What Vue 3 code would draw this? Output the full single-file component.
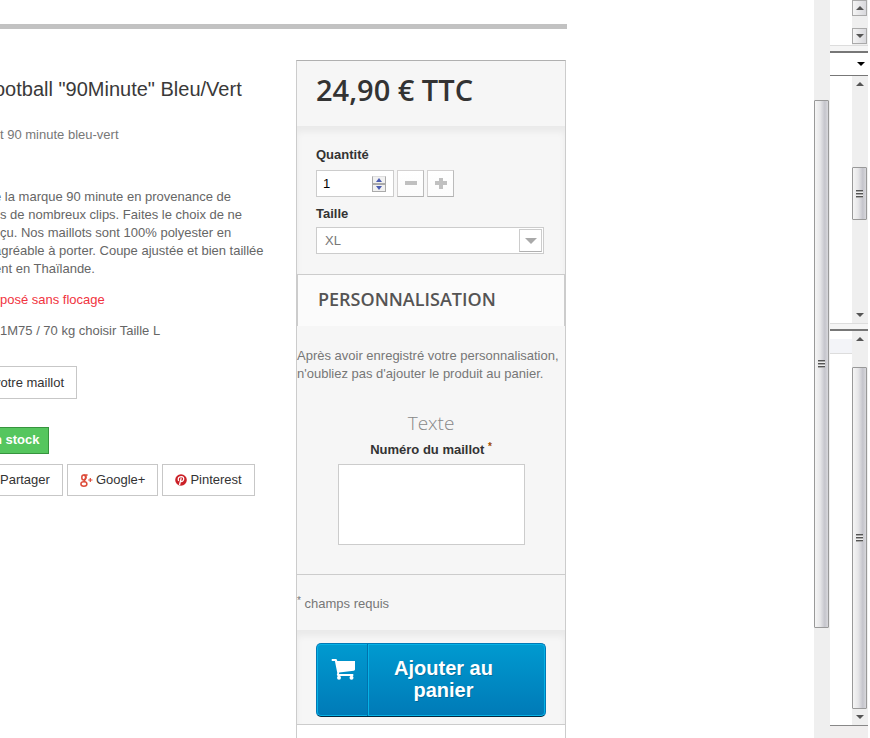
<script setup>
import { ref } from 'vue'

const quantity = ref(1)
const size = ref('XL')
const custom = ref('')
const sizes = ['S', 'M', 'L', 'XL', 'XXL']

const details = [
  { text: 'e la marque 90 minute en provenance de', bleed: true },
  { text: 's de nombreux clips. Faites le choix de ne', bleed: false },
  { text: 'çu. Nos maillots sont 100% polyester en', bleed: false },
  { text: 'agréable à porter. Coupe ajustée et bien taillée', bleed: true },
  { text: 'ent en Thaïlande.', bleed: true }
]

function step(n) {
  quantity.value = Math.max(1, Number(quantity.value) + n)
}
</script>

<template>
  <div class="screen">
    <main class="page">
      <hr class="rule" />
      <div class="product">
        <section class="info">
          <h1 class="bleed">ootball "90Minute" Bleu/Vert</h1>
          <p class="short">t 90 minute bleu-vert</p>
          <p class="details">
            <span v-for="line in details" :key="line.text" :class="{ bleed: line.bleed }">{{ line.text }}</span>
          </p>
          <p class="warning">posé sans flocage</p>
          <p class="advice">1M75 / 70 kg choisir Taille L</p>
          <button type="button" class="plain customize bleed">votre maillot</button>
          <span class="stock bleed">n stock</span>
          <div class="social">
            <button type="button" class="plain share">Partager</button>
            <button type="button" class="plain">
              <svg viewBox="0 0 13 13" width="13" height="13" aria-hidden="true">
                <g fill="none" stroke="#dd4b39" stroke-width="1.5">
                  <ellipse cx="3.7" cy="3.5" rx="1.9" ry="2.5" />
                  <path d="M3.6 .9H7.600M5.400 1.200Q7 3.600 5 5.400Q3.600 6.600 5.400 7.700" />
                  <ellipse cx="3.9" cy="10" rx="3" ry="2.2" />
                </g>
                <path d="M8.200 5.400h1.500V3.900h1.200v1.500h1.600v1.200h-1.600v1.500H9.700V6.600H8.200z" fill="#dd4b39" />
              </svg>
              Google+
            </button>
            <button type="button" class="plain">
              <svg viewBox="0 0 12 12" width="12" height="12" aria-hidden="true">
                <circle cx="6" cy="6" r="5.8" fill="#cb2027" />
                <path d="M3.6 7Q2.200 3.100 6.200 2.600Q9.200 2.700 8.600 5.600Q7.700 8.200 5.700 7.200M6.200 4.200L4.500 11" fill="none" stroke="#fff" stroke-width="1.3" />
              </svg>
              Pinterest
            </button>
          </div>
        </section>

        <form class="card" @submit.prevent>
          <div class="price">24,90 € TTC</div>

          <div class="attributes">
            <label for="quantity">Quantité</label>
            <div class="quantity">
              <div class="number">
                <input id="quantity" v-model="quantity" type="number" min="1" />
                <div class="spin">
                  <button type="button" aria-label="Augmenter" @click="step(1)">
                    <svg viewBox="0 0 6 4" width="6" height="4"><path d="M0 4L3 0L6 4z" fill="#4a5cb0" /></svg>
                  </button>
                  <button type="button" aria-label="Diminuer" @click="step(-1)">
                    <svg viewBox="0 0 6 4" width="6" height="4"><path d="M0 0L3 4L6 0z" fill="#4a5cb0" /></svg>
                  </button>
                </div>
              </div>
              <button type="button" class="step" aria-label="Moins" @click="step(-1)">
                <svg viewBox="0 0 12 12" width="12" height="12"><path d="M0 3h12v4H0z" fill="#c0c0c0" /></svg>
              </button>
              <button type="button" class="step" aria-label="Plus" @click="step(1)">
                <svg viewBox="0 0 12 12" width="12" height="12"><path d="M4 0h4v3h4v4H8v4H4V7H0V3h4z" fill="#c0c0c0" /></svg>
              </button>
            </div>
            <label for="size">Taille</label>
            <div class="select">
              <select id="size" v-model="size">
                <option v-for="s in sizes" :key="s">{{ s }}</option>
              </select>
              <span class="arrow">
                <svg viewBox="0 0 12 6" width="12" height="6"><path d="M0 0h12L6 6z" fill="#a9a9a9" /></svg>
              </span>
            </div>
          </div>

          <h2>PERSONNALISATION</h2>
          <div class="custom">
            <p>Après avoir enregistré votre personnalisation, n'oubliez pas d'ajouter le produit au panier.</p>
            <h3>Texte</h3>
            <label for="shirt-number">Numéro du maillot <sup class="star">*</sup></label>
            <textarea id="shirt-number" v-model="custom"></textarea>
          </div>
          <p class="required"><sup>*</sup> champs requis</p>

          <div class="cart">
            <button type="submit" class="add">
              <span class="icon">
                <svg viewBox="0 0 25 21" width="25" height="21" aria-hidden="true">
                  <path d="M1 0h4q1 0 1.300 2H24v8.600q0 1-1.200 1.100L8.200 13.400L8 15h14.300v2H6.600q-1.400-.8-.3-3L3.900 2H1q-1-1 0-2z" fill="#fff" />
                  <circle cx="8" cy="18.700" r="2" fill="#fff" />
                  <circle cx="20.500" cy="18.700" r="2" fill="#fff" />
                </svg>
              </span>
              <span class="text">Ajouter au panier</span>
            </button>
          </div>
        </form>
      </div>
    </main>

    <div class="track main-track" aria-hidden="true">
      <div class="thumb"><i class="grip"></i></div>
    </div>

    <aside class="side">
      <div class="pane first">
        <div class="track">
          <button type="button" class="scroll boxed" aria-label="Haut"><i class="up"></i></button>
          <button type="button" class="scroll boxed" aria-label="Bas"><i class="down"></i></button>
        </div>
      </div>
      <div class="split"></div>
      <button type="button" class="combo" aria-label="Liste"><i class="down wide"></i></button>
      <div class="pane second">
        <div class="track">
          <button type="button" class="scroll" aria-label="Haut"><i class="up"></i></button>
          <div class="rail">
            <div class="thumb"><i class="grip"></i></div>
          </div>
          <button type="button" class="scroll" aria-label="Bas"><i class="down"></i></button>
        </div>
      </div>
      <div class="split"></div>
      <div class="pane third">
        <div class="header"></div>
        <div class="track">
          <button type="button" class="scroll" aria-label="Haut"><i class="up"></i></button>
          <div class="rail">
            <div class="thumb"><i class="grip"></i></div>
          </div>
          <button type="button" class="scroll" aria-label="Bas"><i class="down"></i></button>
        </div>
      </div>
      <div class="status"></div>
    </aside>
  </div>
</template>

<style>
body {
  margin: 0;
  background: #fff;
}
</style>

<style scoped>
* {
  box-sizing: border-box;
}
.screen {
  display: flex;
  min-height: 100vh;
  overflow: hidden;
  font: 13px/18px "Liberation Sans", Arial, sans-serif;
  color: #777;
}
button,
input,
select,
textarea {
  font: inherit;
  margin: 0;
  padding: 0;
}
h1,
h2,
h3,
p {
  margin: 0;
}
label {
  display: block;
  font-weight: bold;
  color: #333;
}

/* Product page */
.page {
  flex: 1;
  min-width: 0;
  display: flex;
  flex-direction: column;
  padding-top: 24px;
}
.rule {
  width: 100%;
  max-width: 567px;
  height: 5px;
  margin: 0;
  border: 0;
  background: #c2c2c2;
}
.product {
  flex: 1;
  max-width: 566px;
  padding-top: 31px;
  display: grid;
  grid-template-columns: minmax(0, 1fr) 270px;
}
.info {
  display: flex;
  flex-direction: column;
  align-items: flex-start;
  padding-top: 17px;
  white-space: nowrap;
}
.bleed {
  margin-left: -6px;
}
h1 {
  font-size: 20px;
  font-weight: normal;
  line-height: 24px;
  color: #3a3939;
}
.short {
  margin-top: 25px;
}
.details {
  display: flex;
  flex-direction: column;
  margin-top: 44px;
  color: #666;
}
.warning {
  margin-top: 13px;
  color: #f13340;
}
.advice {
  margin-top: 13px;
  color: #666;
}
.plain {
  height: 32px;
  padding: 0 12px;
  display: flex;
  align-items: center;
  gap: 3px;
  border: 1px solid #c7c7c7;
  background: #fff;
  color: #333;
}
.customize {
  height: 33px;
  margin-top: 26px;
  padding-left: 0;
  border-left: 0;
}
.stock {
  margin-top: 28px;
  padding: 3px 8px 4px 0;
  border: 1px solid #36943e;
  border-left: 0;
  background: #55c65e;
  color: #fff;
  font-weight: bold;
}
.social {
  display: flex;
  gap: 4px;
  margin-top: 10px;
}
.share {
  padding-left: 0;
  border-left: 0;
}

/* Purchase card */
.card {
  display: flex;
  flex-direction: column;
  border: 1px solid #ccc;
  border-top-color: #b0b0b0;
  border-bottom: 0;
}
.price {
  padding: 9px 19px 16px;
  background: #f6f6f6;
  font: 600 29px/40px "Open Sans", sans-serif;
  color: #333;
}
.attributes,
.cart {
  background: #f6f6f6;
  box-shadow: inset 0 6px 6px rgba(0, 0, 0, 0.05);
}
.attributes {
  padding: 20px 21px 20px 19px;
}
.quantity {
  display: flex;
  gap: 3px;
  margin: 6px 0 8px;
}
.number {
  display: flex;
  align-items: center;
  width: 78px;
  height: 27px;
  padding: 0 7px 0 6px;
  border: 1px solid #ccc;
  background: #fff;
}
.number input {
  flex: 1;
  min-width: 0;
  border: 0;
  outline: 0;
  background: none;
  color: #000;
  appearance: textfield;
}
.number input::-webkit-inner-spin-button {
  appearance: none;
}
.spin {
  display: grid;
}
.spin button {
  width: 14px;
  height: 8px;
  display: grid;
  place-items: center;
  border: 1px solid #aaa;
  background: #f1f1f1;
}
.spin button:first-child {
  border-top-color: #ddd;
}
.step {
  width: 27px;
  height: 27px;
  display: grid;
  place-items: center;
  border: 1px solid #d3d1d1;
  border-right-color: #bbb;
  border-bottom-color: #b0b0b0;
  background: linear-gradient(#fff, #fbfbfb);
}
.select {
  display: grid;
  height: 27px;
  margin-top: 4px;
  border: 1px solid #ccc;
  background: #fff;
}
.select select,
.arrow {
  grid-area: 1 / 1;
}
.select select {
  padding-left: 8px;
  border: 0;
  outline: 0;
  appearance: none;
  background: none;
  color: #777;
}
.arrow {
  justify-self: end;
  display: grid;
  place-items: center;
  width: 23px;
  margin: 1px;
  border: 1px solid #ccc;
  border-bottom-color: #b0b0b0;
  pointer-events: none;
}
h2 {
  padding: 11px 20px 13px;
  border: 1px solid #ccc;
  border-width: 1px 1px 0;
  background: #fbfbfb;
  font: 600 18px/27px "Open Sans", sans-serif;
  color: #555454;
}
.custom {
  display: flex;
  flex-direction: column;
  align-items: center;
  padding: 21px 0 29px;
  background: #f6f6f6;
}
h3 {
  margin-top: 28px;
  font: 300 19px/24px "Open Sans", sans-serif;
  color: #888;
}
.custom label {
  margin: 6px 0 5px;
}
sup {
  font-size: 10px;
  line-height: 0;
  vertical-align: 4px;
}
.star {
  color: #a04a00;
}
textarea {
  width: 187px;
  height: 81px;
  border: 1px solid #ccc;
  background: #fff;
  resize: none;
}
.required {
  padding: 20px 0 17px;
  border-top: 1px solid #ccc;
  background: #f6f6f6;
}
.cart {
  padding: 13px 19px 7px;
  border-bottom: 1px solid #ccc;
}
.add {
  display: flex;
  width: 100%;
  min-height: 74px;
  border: 1px solid #0079b6;
  border-bottom-color: #012740;
  border-radius: 5px;
  background: linear-gradient(#009ad0, #007ab7);
  box-shadow: inset 0 0 0 1px #06b2e6;
  color: #fff;
  font-size: 20px;
  font-weight: bold;
  line-height: 22px;
  text-shadow: 1px 1px rgba(0, 0, 0, 0.2);
}
.icon {
  align-self: stretch;
  width: 51px;
  padding: 15px 0 0 14px;
  border-right: 1px solid #0072ad;
  text-align: left;
}
.text {
  flex: 1;
  align-self: stretch;
  padding: 13px 27px 0 0;
  border-left: 1px solid #06b2e6;
}

/* Scrollbars */
.track {
  display: flex;
  flex-direction: column;
  width: 16px;
  background: #efefef;
}
.main-track::before {
  content: "";
  flex: 100 0 0;
}
.main-track::after {
  content: "";
  flex: 110 0 0;
}
.main-track .thumb {
  flex: 528 0 0;
}
.thumb {
  display: grid;
  place-items: center;
  width: 15px;
  border: 1px solid #999;
  border-radius: 1px;
  background: linear-gradient(90deg, #f5f5f5, #e6e6e8 40%, #c5c5cc 75%, #d8d8dc);
}
.grip {
  width: 7px;
  height: 8px;
  background: repeating-linear-gradient(#555 0 1px, #aaa 1px 2px, #eee 2px 3px);
}
.side {
  display: flex;
  flex-direction: column;
  width: 38px;
  margin-right: 2px;
}
.pane {
  display: flex;
  justify-content: flex-end;
}
.first {
  height: 45px;
}
.first .track {
  justify-content: space-between;
  padding-bottom: 1px;
}
.second {
  flex: 247 0 0;
}
.third {
  flex: 394 0 0;
}
.header {
  flex: 1;
  height: 15px;
  margin-top: 8px;
  border-bottom: 1px solid #ddd;
  background: #f3f4f8;
}
.split {
  height: 8px;
  border-top: 1px solid #ddd;
  border-bottom: 2px solid #777;
  background: #f5f5f5;
}
.scroll {
  display: grid;
  place-items: center;
  width: 15px;
  height: 16px;
  border: 0;
  background: none;
}
.boxed {
  border: 1px solid #aaa;
  background: linear-gradient(90deg, #f5f5f5, #d8d8dc);
}
.up,
.down {
  border: 4px solid transparent;
}
.up {
  border-top: 0;
  border-bottom-color: #555;
}
.down {
  border-bottom: 0;
  border-top-color: #555;
}
.wide {
  border-top-color: #000;
}
.combo {
  display: flex;
  align-items: center;
  justify-content: flex-end;
  height: 23px;
  padding-right: 3px;
  border: 0;
  border-bottom: 1px solid #777;
  background: #fff;
}
.rail {
  flex: 1;
  display: flex;
  flex-direction: column;
}
.second .rail::before {
  content: "";
  flex: 76 0 0;
}
.second .rail .thumb {
  flex: 51 0 0;
}
.second .rail::after {
  content: "";
  flex: 88 0 0;
}
.third .rail::before {
  content: "";
  flex: 20 0 0;
}
.third .rail .thumb {
  flex: 340 0 0;
}
.status {
  height: 13px;
  border-top: 1px solid #888;
  background: #f0eeee;
}
</style>
